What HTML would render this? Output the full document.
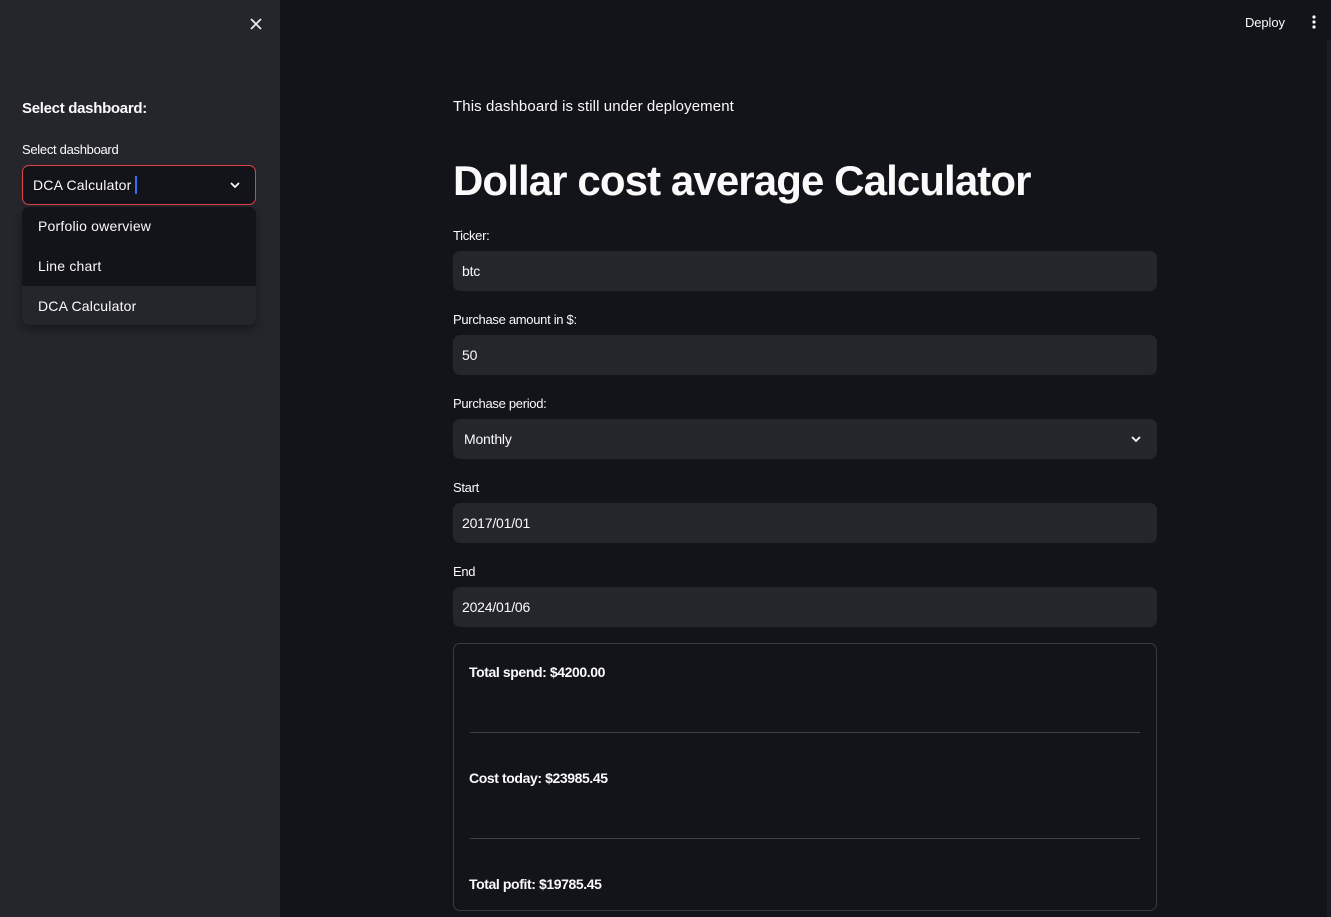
<!DOCTYPE html>
<html><head><meta charset="utf-8"><style>
*{box-sizing:border-box;margin:0;padding:0}
body{width:1331px;height:917px;overflow:hidden;background:#131419;font-family:"Liberation Sans",sans-serif;color:#fafafa;position:relative}
.sb{position:absolute;left:0;top:0;width:280px;height:917px;background:#25262c}
.abs{position:absolute;white-space:nowrap}
.lbl{font-size:13px;letter-spacing:-0.3px}
.inp{position:absolute;left:453px;width:704px;height:40px;background:#25262c;border-radius:7px;font-size:14px;padding:12px 9px;letter-spacing:-0.2px}
.card{position:absolute;left:453px;top:643px;width:704px;height:268px;border:1px solid #3a3b42;border-radius:7px}
.hr{position:absolute;left:16px;right:16px;height:1px;background:#3f4047}
.ct{position:absolute;left:15px;font-size:14px;font-weight:bold;letter-spacing:-0.4px}
</style></head><body>
<div class="sb">
<svg class="abs" style="left:249px;top:17px" width="14" height="14" viewBox="0 0 14 14"><path d="M2 2L12 12M12 2L2 12" stroke="#e8e8ea" stroke-width="1.8"/></svg>
<div class="abs" style="left:22px;top:100px;font-size:15px;font-weight:bold;letter-spacing:-0.3px">Select dashboard:</div>
<div class="abs lbl" style="left:22px;top:142px">Select dashboard</div>
<div class="abs" style="left:22px;top:165px;width:234px;height:40px;border:1px solid #e0424a;border-radius:7px;background:#131419"></div>
<div class="abs" style="left:33px;top:177px;font-size:14px;letter-spacing:0.2px">DCA Calculator</div>
<div class="abs" style="left:135px;top:176px;width:2px;height:18px;background:#3b6cf6"></div>
<svg class="abs" style="left:229px;top:180px" width="12" height="10" viewBox="0 0 12 10"><path d="M2 3L6 7L10 3" stroke="#fafafa" stroke-width="1.8" fill="none"/></svg>
<div class="abs" style="left:22px;top:207px;width:234px;height:118px;background:#131419;border-radius:7px;overflow:hidden;box-shadow:0 4px 10px rgba(0,0,0,.4)">
<div style="position:absolute;left:0;top:79px;width:234px;height:39px;background:#25262c"></div>
<div class="abs" style="left:16px;top:11px;font-size:14px;letter-spacing:0.2px">Porfolio owerview</div>
<div class="abs" style="left:16px;top:51px;font-size:14px;letter-spacing:0.2px">Line chart</div>
<div class="abs" style="left:16px;top:91px;font-size:14px;letter-spacing:0.2px">DCA Calculator</div>
</div>
</div>
<div class="abs" style="left:1245px;top:15px;font-size:13px;letter-spacing:-0.1px">Deploy</div>
<svg class="abs" style="left:1311px;top:14px" width="6" height="16"><circle cx="3" cy="3" r="1.6" fill="#fafafa"/><circle cx="3" cy="8" r="1.6" fill="#fafafa"/><circle cx="3" cy="13" r="1.6" fill="#fafafa"/></svg>
<div class="abs" style="left:1327px;top:40px;width:4px;height:877px;background:#1c1d22"></div>
<div class="abs" style="left:453px;top:98px;font-size:15px;letter-spacing:0.1px">This dashboard is still under deployement</div>
<div class="abs" style="left:453px;top:157px;font-size:42px;font-weight:bold;letter-spacing:-0.9px">Dollar cost average Calculator</div>
<div class="abs lbl" style="left:453px;top:228px">Ticker:</div>
<div class="inp" style="top:251px">btc</div>
<div class="abs lbl" style="left:453px;top:312px">Purchase amount in $:</div>
<div class="inp" style="top:335px">50</div>
<div class="abs lbl" style="left:453px;top:396px">Purchase period:</div>
<div class="inp" style="top:419px;padding-left:11px">Monthly</div>
<svg class="abs" style="left:1130px;top:434px" width="12" height="10" viewBox="0 0 12 10"><path d="M2 3L6 7L10 3" stroke="#fafafa" stroke-width="1.8" fill="none"/></svg>
<div class="abs lbl" style="left:453px;top:480px">Start</div>
<div class="inp" style="top:503px">2017/01/01</div>
<div class="abs lbl" style="left:453px;top:564px">End</div>
<div class="inp" style="top:587px">2024/01/06</div>
<div class="card">
<div class="ct" style="top:20px">Total spend: $4200.00</div>
<div class="hr" style="top:88px"></div>
<div class="ct" style="top:126px">Cost today: $23985.45</div>
<div class="hr" style="top:194px"></div>
<div class="ct" style="top:232px">Total pofit: $19785.45</div>
</div>
</body></html>
